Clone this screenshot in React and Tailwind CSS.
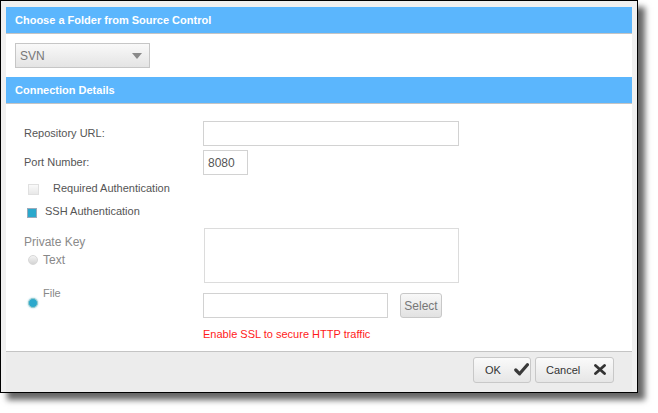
import React from "react";

function Check() {
  return (
    <svg width="15" height="13" viewBox="0 0 15 13">
      <path d="M1.8 7 L5.6 10.8 L13.4 1.8" fill="none" stroke="#3a3a3a" strokeWidth="3.2" strokeLinecap="round" strokeLinejoin="round" />
    </svg>
  );
}

function Cross() {
  return (
    <svg width="12" height="11" viewBox="0 0 12 11">
      <path d="M1.5 1.5 L10.5 9.5 M10.5 1.5 L1.5 9.5" fill="none" stroke="#333" strokeWidth="2.8" strokeLinecap="round" />
    </svg>
  );
}

export default function App() {
  return (
    <div className="w-[658px] h-[413px] bg-white font-['Liberation_Sans',Arial,sans-serif]">
      <div className="w-[638px] h-[393px] border border-black bg-[#f0f0f0] shadow-[7px_7px_6px_rgba(0,0,0,0.6)] flex flex-col pt-[6px] px-[5px]">
        <div className="bg-white flex-1 flex flex-col">
          {/* Header 1 */}
          <div className="h-[27px] bg-[#5bb6fd] border-b border-[#c4c4c4] flex items-center pl-[9px] text-white text-[11px] font-bold">
            Choose a Folder from Source Control
          </div>
          <div className="h-[43px] pt-[9px] pl-[9px]">
            <div className="w-[135px] h-[25px] border border-[#c6c6c6] bg-gradient-to-b from-[#f9f9f9] to-[#e4e4e4] flex items-center pl-[4px] pr-[7px] text-[12px] text-[#777]">
              <span>SVN</span>
              <svg className="ml-auto" width="10" height="6" viewBox="0 0 10 6">
                <path d="M0 0 L10 0 L5 6 Z" fill="#8a8a8a" />
              </svg>
            </div>
          </div>
          {/* Header 2 */}
          <div className="h-[27px] bg-[#5bb6fd] border-b border-[#c4c4c4] flex items-center pl-[9px] text-white text-[11px] font-bold">
            Connection Details
          </div>
          {/* Form */}
          <div className="flex-1 pl-[18px] pt-[17px] text-[11px] text-[#555]">
            <div className="flex items-center h-[25px]">
              <div className="w-[179px]">Repository URL:</div>
              <div className="w-[256px] h-[25px] border border-[#d2d2d2]" />
            </div>
            <div className="flex items-center h-[25px] mt-[4px]">
              <div className="w-[179px]">Port Number:</div>
              <div className="w-[45px] h-[25px] border border-[#d2d2d2] flex items-center pl-[4px] text-[12px] text-[#555]">8080</div>
            </div>
            <div className="flex items-start mt-[6px] h-[14px] leading-[14px]">
              <div className="ml-[4px] mt-[3px] w-[11px] h-[11px] border border-[#e0e0e0] bg-gradient-to-b from-[#fafafa] to-[#e8e8e8]" />
              <span className="ml-[14px]">Required Authentication</span>
            </div>
            <div className="flex items-start mt-[9px] h-[14px] leading-[14px]">
              <div className="ml-[3px] mt-[4px] w-[10px] h-[10px] border border-[#9ab] bg-[#2aa8cc]" />
              <span className="ml-[8px]">SSH Authentication</span>
            </div>
            <div className="flex mt-[10px]">
              <div className="w-[179px] flex flex-col">
                <div className="mt-[7px] text-[12px] leading-[15px] text-[#8a8a8a]">Private Key</div>
                <div className="flex items-start mt-[3px] h-[15px]">
                  <div className="ml-[4px] mt-[2px] w-[10px] h-[10px] rounded-full border border-[#d8d8d8] bg-gradient-to-b from-[#f4f4f4] to-[#d4d4d4]" />
                  <span className="ml-[5px] text-[12px] leading-[15px] text-[#888]">Text</span>
                </div>
                <div className="mt-[19px] ml-[19px] text-[11px] leading-[12px] text-[#888]">File</div>
                <div className="ml-[4px] mt-[-1px] w-[10px] h-[10px] rounded-full bg-[#2aa8cc] border border-[#9cc] shadow-[0_0_2px_#8cd]" />
              </div>
              <div className="flex flex-col">
                <div className="ml-[1px] w-[255px] h-[55px] border border-[#dcdcdc]" />
                <div className="flex mt-[10px]">
                  <div className="w-[185px] h-[25px] border border-[#d2d2d2]" />
                  <div className="ml-[12px] w-[42px] h-[25px] border border-[#c8c8c8] rounded-[3px] bg-gradient-to-b from-[#f8f8f8] to-[#e2e2e2] flex items-center justify-center text-[12px] text-[#777]">
                    Select
                  </div>
                </div>
                <div className="mt-[9px] text-[11px] leading-[14px] text-[#ff1a1a]">Enable SSL to secure HTTP traffic</div>
              </div>
            </div>
          </div>
          {/* Footer */}
          <div className="h-[41px] border-t border-[#c4c4c4] bg-[#ececec] flex justify-end items-start pt-[5px] pr-[18px] gap-[4px]">
            <div className="w-[58px] h-[26px] border border-[#c8c8c8] rounded-[3px] bg-gradient-to-b from-[#fafafa] to-[#e6e6e6] flex items-center pl-[11px] text-[11px] text-[#333]">
              <span>OK</span>
              <span className="ml-[13px] mt-[-1px]"><Check /></span>
            </div>
            <div className="w-[79px] h-[26px] border border-[#c8c8c8] rounded-[3px] bg-gradient-to-b from-[#fafafa] to-[#e6e6e6] flex items-center pl-[10px] text-[11px] text-[#333]">
              <span>Cancel</span>
              <span className="ml-[14px] mt-[-1px]"><Cross /></span>
            </div>
          </div>
        </div>
      </div>
    </div>
  );
}
